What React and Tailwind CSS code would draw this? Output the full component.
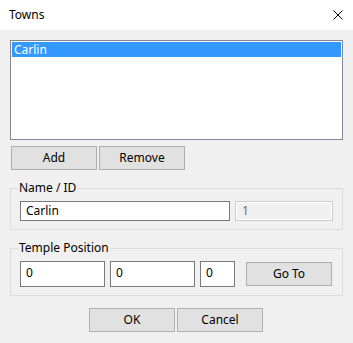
import React from "react";

const font = { fontFamily: '"Noto Sans", "Segoe UI", sans-serif' };

function Btn({ children, className = "" }) {
  return (
    <button
      className={
        "h-[24px] w-[86px] border border-[#adadad] bg-[#e1e1e1] text-[12px] leading-[16px] text-black flex items-center justify-center " +
        className
      }
    >
      {children}
    </button>
  );
}

export default function App() {
  return (
    <div
      className="w-[353px] h-[343px] bg-[#f0f0f0] flex flex-col text-black text-[12px] leading-[16px]"
      style={font}
    >
      <div className="h-[30px] bg-white flex items-center justify-between pl-[9px] pr-[10px] shrink-0">
        <span className="text-[12px]">Towns</span>
        <svg width="10" height="10" viewBox="0 0 10 10" className="mb-[1px]">
          <path d="M0.5 0.5 L9.5 9.5 M9.5 0.5 L0.5 9.5" stroke="#000" strokeWidth="1" />
        </svg>
      </div>
      <div className="flex flex-col pl-[10px] pt-[10px]">
        <div className="w-[333px] h-[100px] border border-[#828790] bg-white p-[1px]">
          <div className="h-[15px] bg-[#3399ff] text-white pl-[2px] flex items-center">
            Carlin
          </div>
        </div>
        <div className="flex gap-[2px] ml-[1px] mt-[6px]">
          <Btn>Add</Btn>
          <Btn>Remove</Btn>
        </div>
        <fieldset className="mt-[10px] w-[333px] border border-[#dcdcdc] pl-[9px] pt-[5px] pb-[8px] flex">
          <legend className="ml-[-2px] px-[1px] leading-[16px]">Name / ID</legend>
          <div className="flex gap-[5px]">
            <div className="w-[210px] h-[20px] border border-[#7a7a7a] bg-white pl-[5px] flex items-center">
              Carlin
            </div>
            <div className="w-[98px] h-[20px] border border-[#cccccc] bg-[#f0f0f0] shadow-[inset_0_0_0_1px_#ffffff] pl-[6px] flex items-center text-[#6d6d6d]">
              1
            </div>
          </div>
        </fieldset>
        <fieldset className="mt-[10px] w-[333px] border border-[#dcdcdc] pl-[9px] pt-[5px] pb-[8px]">
          <legend className="ml-[-2px] px-[1px] leading-[16px]">Temple Position</legend>
          <div className="flex items-center">
            <div className="w-[85px] h-[26px] border border-[#7a7a7a] bg-white pl-[5px] pt-[3px]">0</div>
            <div className="w-[85px] h-[26px] border border-[#7a7a7a] bg-white pl-[5px] pt-[3px] ml-[5px]">0</div>
            <div className="w-[35px] h-[26px] border border-[#7a7a7a] bg-white pl-[5px] pt-[3px] ml-[5px]">0</div>
            <Btn className="ml-[11px]">Go To</Btn>
          </div>
        </fieldset>
        <div className="flex gap-[2px] ml-[79px] mt-[12px]">
          <Btn>OK</Btn>
          <Btn>Cancel</Btn>
        </div>
      </div>
    </div>
  );
}
